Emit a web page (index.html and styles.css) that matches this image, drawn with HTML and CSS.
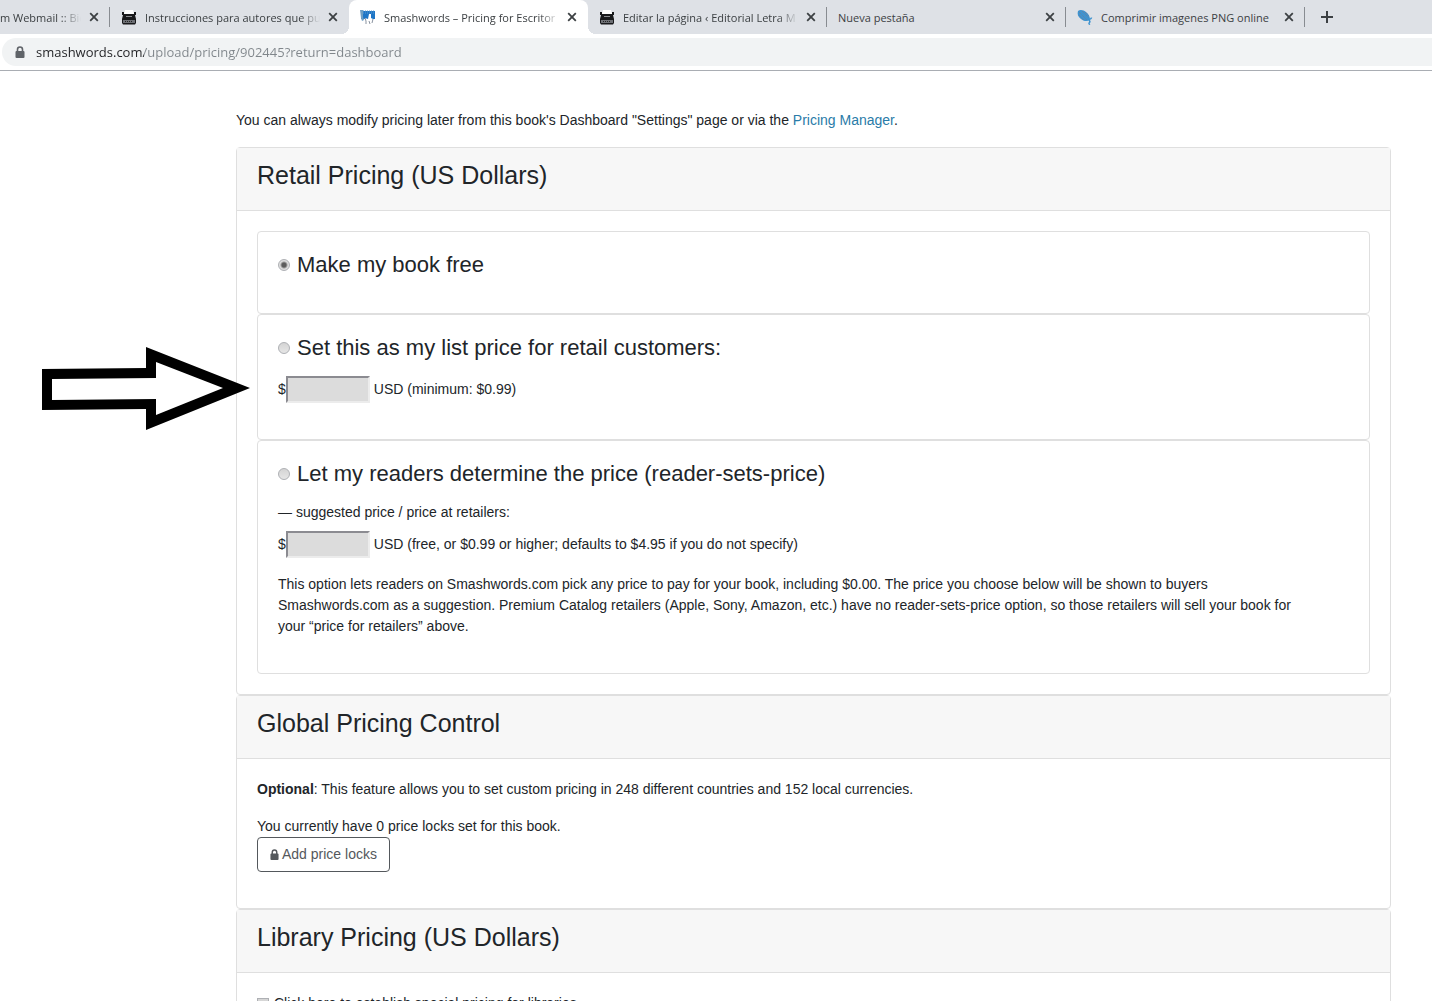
FILE: index.html
```html
<!DOCTYPE html>
<html lang="en">
	<head>
		<meta charset="UTF-8">
		<meta name="viewport" content="width=device-width, initial-scale=1">
		<title>Smashwords – Pricing for Escritores</title>
		<link rel="stylesheet" href="styles.css">
	</head>
	<body>

		<svg class="sprite" aria-hidden="true">
			<symbol id="close" viewBox="0 0 10 10">
				<path d="M1.2 1.2l7.6 7.6M8.800 1.2L1.2 8.8" fill="none" stroke="#3c4043" stroke-width="1.8"/>
			</symbol>
			<symbol id="typewriter" viewBox="0 0 16 16">
				<path d="M4 1h8l1 4H3z" fill="#fff"/>
				<path d="M1 3h2v2h10V3h2v3h-1l1 4v4l-1 1.500H2L1 14v-4l1-4H1z" fill="#18191b"/>
				<path d="M5 7h6v1H5z" fill="#8a8c90"/>
				<path d="M2 11h12v3H2z" fill="#6d6f74"/>
				<path d="M4 12h1v1H4zm2 0h1v1H6zm2 0h1v1H8zm2 0h1v1h-1z" fill="#222"/>
			</symbol>
			<symbol id="lock" viewBox="0 0 10 12">
				<path d="M2.500 6V3.500a2.500 2.500 0 0 1 5 0V6" fill="none" stroke="currentColor" stroke-width="1.600"/>
				<rect x="0.500" y="5" width="9" height="7" rx="1" fill="currentColor"/>
			</symbol>
		</svg>

		<header class="browser">
			<div class="tabs">
				<div class="tab tab-cut">
					<span class="tab-title tab-fade">m Webmail :: Bie</span>
					<button class="tab-close" aria-label="Close"><svg><use href="#close"/></svg></button>
				</div>
				<div class="tab">
					<svg class="favicon"><use href="#typewriter"/></svg>
					<span class="tab-title tab-fade">Instrucciones para autores que pu</span>
					<button class="tab-close" aria-label="Close"><svg><use href="#close"/></svg></button>
				</div>
				<div class="tab tab-active">
					<svg class="favicon" viewBox="0 0 16 16">
						<path d="M1 2h14v8H1z" fill="#1f76c6"/>
						<path d="M0 1h3v7l1 3-2 1-1-3z" fill="#6f9fc4"/>
						<path d="M3 2h12M3 4h12" fill="none" stroke="#5b9ad0" stroke-dasharray="1 1"/>
						<path d="M5 9l3 1 1-5h2v4l2 1 1 3-2 3H9l-1-3-2 1z" fill="#fff"/>
						<path d="M5 9l1 3v3M9 12l1 3M13 10l-1 4" fill="none" stroke="#8a93a0"/>
					</svg>
					<span class="tab-title tab-fade">Smashwords – Pricing for Escritor</span>
					<button class="tab-close" aria-label="Close"><svg><use href="#close"/></svg></button>
				</div>
				<div class="tab">
					<svg class="favicon"><use href="#typewriter"/></svg>
					<span class="tab-title tab-fade">Editar la página ‹ Editorial Letra M</span>
					<button class="tab-close" aria-label="Close"><svg><use href="#close"/></svg></button>
				</div>
				<div class="tab">
					<span class="tab-title">Nueva pestaña</span>
					<button class="tab-close" aria-label="Close"><svg><use href="#close"/></svg></button>
				</div>
				<div class="tab">
					<svg class="favicon" viewBox="0 0 16 16">
						<path d="M1 2c2-2 6-1 8 1 3 2 4 5 4 8-3 2-7 1-9-1-3-2-4-5-3-8z" fill="#3f93cf"/>
						<path d="M12 10c1 .5 2.500-.5 2.500-1.500M12 11c1 1 1.500 1.500.5 2.500s-.5 2 .5 1.500" fill="none" stroke="#3f93cf" stroke-width="1.500"/>
						<path d="M2 3l8 8M2 6l5 5M5 2l7 7M8 3l4 4" fill="none" stroke="#6b7f9b" stroke-dasharray="1 1"/>
					</svg>
					<span class="tab-title">Comprimir imagenes PNG online</span>
					<button class="tab-close" aria-label="Close"><svg><use href="#close"/></svg></button>
				</div>
				<button class="tab-new" aria-label="New tab">
					<svg viewBox="0 0 12 12"><path d="M6 0v12M0 6h12" stroke="#3c4043" stroke-width="2"/></svg>
				</button>
			</div>
			<div class="toolbar">
				<div class="address">
					<svg class="address-lock"><use href="#lock"/></svg>
					<input class="address-input" type="text" aria-label="Address" value="smashwords.com/upload/pricing/902445?return=dashboard">
				</div>
			</div>
		</header>

		<main class="page">
			<p>You can always modify pricing later from this book's Dashboard "Settings" page or via the <a href="#">Pricing Manager</a>.</p>

			<form action="#">
				<section class="card">
					<div class="card-header"><h2>Retail Pricing (US Dollars)</h2></div>
					<div class="card-body">

						<div class="option">
							<h3><label><input type="radio" name="pricing" checked> Make my book free</label></h3>
						</div>

						<div class="option">
							<h3><label><input type="radio" name="pricing"> Set this as my list price for retail customers:</label></h3>
							<p class="price">
								<label for="list-price">$</label><input id="list-price" type="text">
								<span>USD (minimum: $0.99)</span>
							</p>
						</div>

						<div class="option">
							<h3><label><input type="radio" name="pricing"> Let my readers determine the price (reader-sets-price)</label></h3>
							<p class="note">— suggested price / price at retailers:</p>
							<p class="price">
								<label for="suggested-price">$</label><input id="suggested-price" type="text">
								<span>USD (free, or $0.99 or higher; defaults to $4.95 if you do not specify)</span>
							</p>
							<p class="description">This option lets readers on Smashwords.com pick any price to pay for your book, including $0.00. The price you choose below will be shown to buyers Smashwords.com as a suggestion. Premium Catalog retailers (Apple, Sony, Amazon, etc.) have no reader-sets-price option, so those retailers will sell your book for your “price for retailers” above.</p>
						</div>

					</div>
				</section>

				<section class="card">
					<div class="card-header"><h2>Global Pricing Control</h2></div>
					<div class="card-body">
						<p><strong>Optional</strong>: This feature allows you to set custom pricing in 248 different countries and 152 local currencies.</p>
						<div class="locks">
							You currently have 0 price locks set for this book.
							<button class="btn" type="button"><svg><use href="#lock"/></svg>Add price locks</button>
						</div>
					</div>
				</section>

				<section class="card">
					<div class="card-header"><h2>Library Pricing (US Dollars)</h2></div>
					<div class="card-body">
						<label class="check"><input type="checkbox"> Click here to establish special pricing for libraries.</label>
					</div>
				</section>
			</form>

			<!-- pointer to the list price field -->
			<svg class="arrow" viewBox="0 0 208 83" aria-hidden="true">
				<path d="M0 22l104-1V0l104 41L104 83V62L0 63z" fill="#000"/>
				<path d="M10 32l104-1V15l67 26-67 27V52l-104 1z" fill="#fff"/>
			</svg>
		</main>

	</body>
</html>
```
FILE: styles.css
```css
* {
	box-sizing: border-box;
}
html {
	overflow: hidden;
}
body {
	margin: 0;
	background: #fff;
	color: #212529;
	font: 14px/21px "Liberation Sans", Arial, sans-serif;
}
p {
	margin: 0 0 16px;
}
a {
	color: #2a7ba8;
	text-decoration: none;
}
button {
	font: inherit;
	cursor: pointer;
}
.sprite {
	display: none;
}

/* browser bar */
.browser {
	border-bottom: 1px solid #a9adb3;
	font-family: "Open Sans", "Noto Sans", sans-serif;
}
.tabs {
	display: flex;
	height: 34px;
	background: #dee1e6;
}
.tab {
	display: flex;
	align-items: center;
	gap: 8px;
	flex: 0 0 239px;
	min-width: 0;
	padding: 0 11px;
	background: linear-gradient(#888c91, #888c91) right 7px / 1px 20px no-repeat;
	color: #3c4043;
	font-size: 11px;
}
.tab-cut {
	flex-basis: 110px;
	padding-left: 0;
}
.tab-active {
	position: relative;
	background: #fff;
	border-radius: 8px 8px 0 0;
}
.tab-active::before,
.tab-active::after {
	content: "";
	position: absolute;
	bottom: 0;
	width: 8px;
	height: 8px;
}
.tab-active::before {
	right: 100%;
	background: radial-gradient(circle at 0 0, transparent 8px, #fff 8px);
}
.tab-active::after {
	left: 100%;
	background: radial-gradient(circle at 100% 0, transparent 8px, #fff 8px);
}
.tab:has(+ .tab-active) {
	background: none;
}
.favicon {
	flex: none;
	width: 16px;
	height: 16px;
}
.tab-title {
	flex: 1;
	overflow: hidden;
	white-space: nowrap;
}
.tab-fade {
	mask-image: linear-gradient(to left, transparent, #000 20px);
}
.tab-close,
.tab-new {
	display: flex;
	flex: none;
	border: 0;
	padding: 0;
	background: none;
}
.tab-close svg {
	width: 10px;
	height: 10px;
}
.tab-new {
	align-items: center;
	margin-left: 16px;
}
.tab-new svg {
	width: 12px;
	height: 12px;
}
.toolbar {
	padding: 4px 0 4px 2px;
}
.address {
	display: flex;
	align-items: center;
	gap: 11px;
	height: 28px;
	padding-left: 13px;
	border-radius: 14px 0 0 14px;
	background: #f1f3f4;
}
.address-lock {
	width: 10px;
	height: 12px;
	color: #5f6368;
}
.address-input {
	flex: 1;
	border: 0;
	padding: 0;
	outline: 0;
	/* host dark, path grey */
	background: linear-gradient(to right, #202124 108px, #80868b 108px) text;
	color: transparent;
	font: 13px/20px "Open Sans", "Noto Sans", sans-serif;
}

/* page */
.page {
	position: relative;
	padding: 39px 41px 0 236px;
}
.card,
.option {
	border: 1px solid #dfdfdf;
	border-radius: 4px;
}
.card-header {
	padding: 12px 20px;
	border-bottom: 1px solid #dfdfdf;
	background: #f7f7f7;
}
.card-body {
	padding: 20px;
}
.option {
	padding: 20px;
}
h2 {
	margin: 0 0 8px;
	font-size: 25px;
	font-weight: normal;
	line-height: 30px;
}
h3 {
	margin: 0 0 16px;
	font-size: 22px;
	font-weight: normal;
	line-height: 25px;
}
h3 label {
	display: flex;
	align-items: center;
	gap: 7px;
}
input[type=radio],
input[type=checkbox] {
	appearance: none;
	width: 12px;
	height: 12px;
	margin: 0;
	border: 1px solid #aeb0b4;
	background: linear-gradient(#d4d4d4, #e6e6e6);
}
input[type=radio] {
	border-radius: 50%;
}
input[type=radio]:checked {
	background: radial-gradient(circle, #5c5c5c 2px, #dedede 4px);
}
.note {
	margin-bottom: 8px;
}
.description {
	padding-right: 40px;
}
.price {
	display: flex;
	align-items: center;
}
.price input {
	width: 84px;
	height: 27px;
	margin-right: 4px;
	border: 2px solid;
	border-color: #8b8b91 #ececec #ececec #8b8b91;
	background: #dcdcdc;
}
.locks {
	display: flex;
	flex-direction: column;
	align-items: flex-start;
	margin-bottom: 16px;
}
.btn {
	display: flex;
	align-items: center;
	gap: 3px;
	padding: 6px 12px;
	border: 1px solid #54585c;
	border-radius: 4px;
	background: #fff;
	color: #54585c;
}
.btn svg {
	width: 9px;
	height: 11px;
}
.check {
	display: flex;
	align-items: center;
	gap: 5px;
}
.arrow {
	position: absolute;
	top: 276px;
	left: 42px;
	width: 208px;
	height: 83px;
}
```
